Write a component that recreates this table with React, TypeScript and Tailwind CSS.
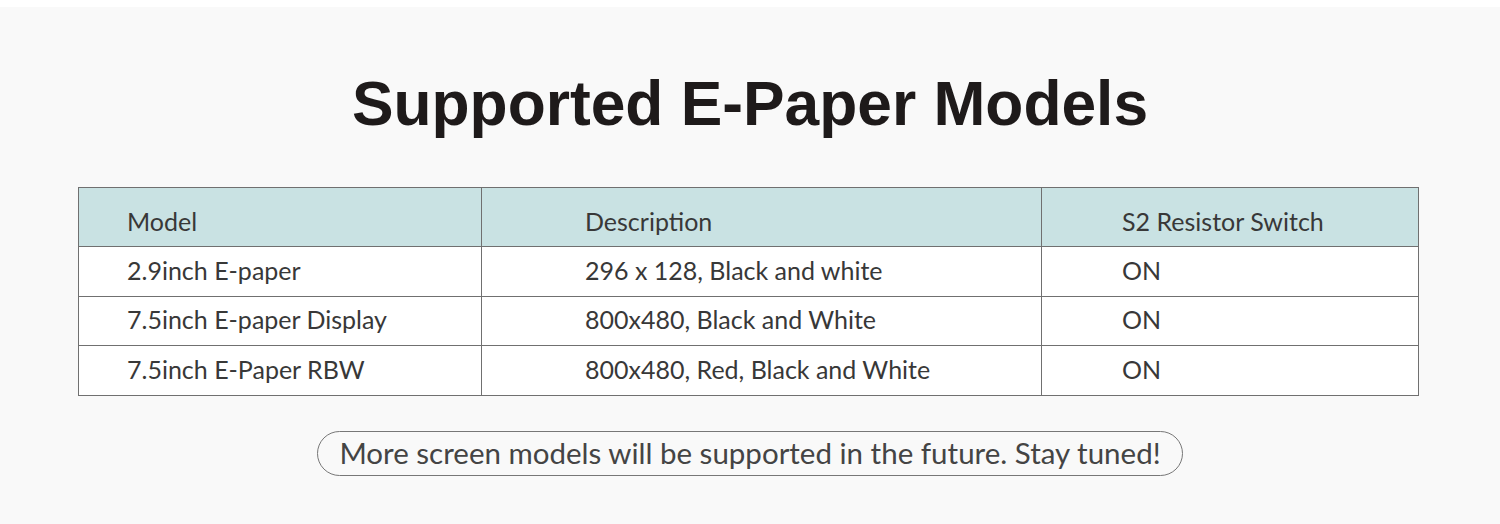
const rows = [
  { model: "2.9inch E-paper", desc: "296 x 128, Black and white", sw: "ON" },
  { model: "7.5inch E-paper Display", desc: "800x480, Black and White", sw: "ON" },
  { model: "7.5inch E-Paper RBW", desc: "800x480, Red, Black and White", sw: "ON" },
];

export default function App() {
  return (
    <div className="w-[1500px] h-[524px] bg-white pt-[7px]">
      <div className="h-full bg-[#f9f9f9] flex flex-col items-center">
        {/* Title */}
        <h1 className="mt-[62px] text-[62.3px] leading-[70px] font-bold text-[#1e1a1a] font-['Liberation_Sans',Arial,sans-serif]">
          Supported E-Paper Models
        </h1>

        {/* Table */}
        <table className="self-start ml-[78px] mt-[48px] w-[1341px] border-collapse font-['Lato',sans-serif] text-[25px] text-[#383838]">
          <colgroup>
            <col className="w-[403px]" />
            <col className="w-[560px]" />
            <col />
          </colgroup>
          <thead>
            <tr className="bg-[#c9e2e3] h-[59px]">
              <th className="border border-[#707070] pl-[48px] pt-[10px] text-left font-normal">Model</th>
              <th className="border border-[#707070] pl-[103px] pt-[10px] text-left font-normal">Description</th>
              <th className="border border-[#707070] pl-[80px] pt-[10px] text-left font-normal">S2 Resistor Switch</th>
            </tr>
          </thead>
          <tbody>
            {rows.map((r) => (
              <tr key={r.model} className="bg-white h-[49.67px]">
                <td className="border border-[#707070] pl-[48px] pb-[2px]">{r.model}</td>
                <td className="border border-[#707070] pl-[103px] pb-[2px]">{r.desc}</td>
                <td className="border border-[#707070] pl-[80px] pb-[2px]">{r.sw}</td>
              </tr>
            ))}
          </tbody>
        </table>

        {/* Note pill */}
        <div className="mt-[35px] h-[45px] px-[21px] flex items-center rounded-full border border-[#777] text-[29.5px] text-[#444] font-['Lato',sans-serif]">
          More screen models will be supported in the future. Stay tuned!
        </div>
      </div>
    </div>
  );
}
